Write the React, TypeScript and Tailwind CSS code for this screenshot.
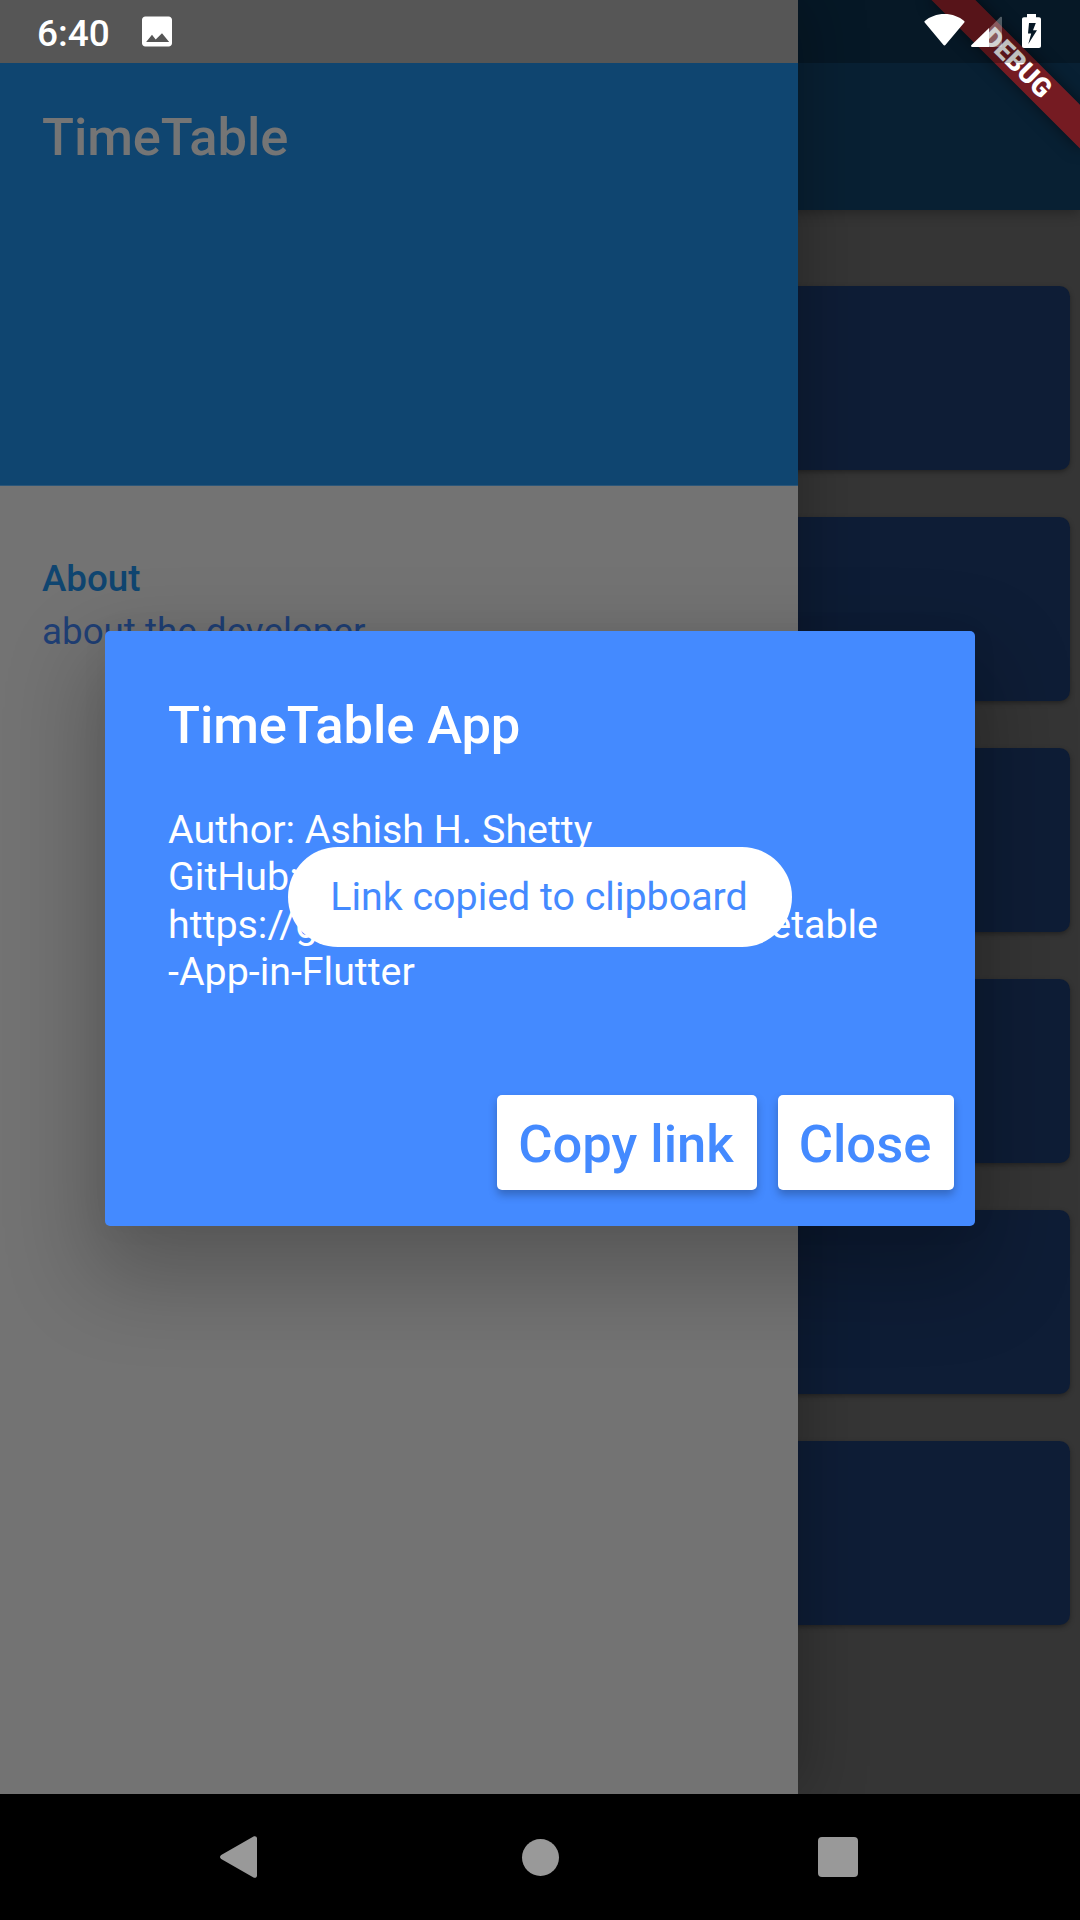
const cards = [0, 1, 2, 3, 4, 5];

function StatusBar() {
  return (
    <div className="absolute inset-x-0 top-0 flex h-[63px] items-start bg-black/25 text-white">
      <span className="ml-[37px] mt-[12px] text-[37px] leading-[44px] font-medium">6:40</span>
      <svg className="absolute left-[137px] top-[11px]" width="40" height="41" viewBox="0 0 24 24" fill="currentColor">
        <path d="M21 19V5c0-1.1-.9-2-2-2H5c-1.1 0-2 .9-2 2v14c0 1.1.9 2 2 2h14c1.1 0 2-.9 2-2zM9 14l2.200 2.800L15 13l4.300 5.300H5.500z" />
      </svg>
      <div className="absolute left-[924px] top-[14px] flex items-start">
        <svg width="41" height="32" viewBox="0 0 41 32" fill="currentColor">
          <path d="M20.500 0C12.800 0 5.800 2.700 .8 7c-.5.400-.5 1-.1 1.500l18.600 22.300c.6.800 1.700.800 2.300 0L40.300 8.500c.4-.500.3-1.100-.1-1.500C35.200 2.700 28.200 0 20.500 0z" />
        </svg>
        <svg className="ml-[6px] mt-[2px]" width="31" height="31" viewBox="0 0 31 31" fill="currentColor">
          <path opacity=".3" d="M18 12.500L29.300 1c.7-.7 1.700-.3 1.700.7V29.500c0 .900-.6 1.500-1.500 1.500H18z" />
          <path d="M18 12V31H1.300c-1.300 0-1.700-1-.8-1.900z" />
        </svg>
        <svg className="ml-[20px]" width="19" height="34" viewBox="0 0 19 34" fill="currentColor">
          <path fillRule="evenodd" d="M5 0h9v3.300h3c1.200 0 2 .800 2 2V32c0 1.200-.8 2-2 2H2c-1.200 0-2-.800-2-2V5.300c0-1.200.8-2 2-2h3zM7 9L6 19.500h3.200L6.300 30 15 16.300h-4L13.800 9z" />
        </svg>
      </div>
    </div>
  );
}

function DebugBanner() {
  return (
    <div className="absolute right-0 top-0 h-0 w-0 rotate-45">
      <div className="absolute left-[-105px] top-[73.5px] flex h-[31.5px] w-[210px] items-center justify-center bg-[#b61919]/63 text-[26.8px] leading-none font-black text-white shadow-[0_0_16px_rgba(0,0,0,0.5)]">
        DEBUG
      </div>
    </div>
  );
}

function Drawer() {
  return (
    <aside className="absolute left-0 top-0 h-[1794px] w-[798px] bg-[#737373] shadow-[7px_0_57px_rgba(0,0,0,0.25)]">
      <div className="h-[63px]" />
      <header className="h-[423px] border-b border-[#2b5679] bg-[#0f4570] px-[42px] pt-[43px]">
        <h1 className="text-[52.5px] leading-[62px] font-medium tracking-[-0.1px] text-[#757575]">TimeTable</h1>
      </header>
      <nav className="px-[42px] pt-[71px] text-[36.75px]">
        <p className="leading-[44px] font-medium text-[#0f4570]">About</p>
        <p className="mt-[9px] leading-[44px] text-[#1f3f75]">about the developer</p>
      </nav>
    </aside>
  );
}

function AboutDialog() {
  return (
    <section className="absolute left-[105px] top-[631px] flex h-[595px] w-[870px] flex-col rounded-[5px] bg-[#448aff] px-[63px] pt-[63px] text-white shadow-[0_39px_87px_15px_rgba(0,0,0,0.24),0_0_30px_rgba(0,0,0,0.04)]">
      <h2 className="text-[52.5px] leading-[62px] font-medium tracking-[-0.1px]">TimeTable App</h2>
      <div className="mt-[50px] text-[39.375px] leading-[47.25px]">
        <p>Author: Ashish H. Shetty</p>
        <p>GitHub:</p>
        <p className="flex w-[710px] justify-between">
          <span>https://github</span>
          <span>Timetable</span>
        </p>
        <p>-App-in-Flutter</p>
      </div>
      <div className="-mr-[42px] mt-auto mb-[36px] flex justify-end gap-[21px] text-[52.5px] leading-[62px] font-medium text-[#448aff]">
        <button className="h-[95px] w-[260px] rounded-[5px] bg-white pt-[3px] pr-[2px] shadow-[0_5px_8px_rgba(0,0,0,0.25)]">Copy link</button>
        <button className="h-[95px] w-[176px] rounded-[5px] bg-white pt-[3px] pr-[2px] shadow-[0_5px_8px_rgba(0,0,0,0.25)]">Close</button>
      </div>
    </section>
  );
}

export default function App() {
  return (
    <div className="relative flex h-[1920px] w-[1080px] flex-col overflow-hidden bg-[#353535] font-['Roboto',sans-serif]">
      <div className="z-0 h-[210px] shrink-0 bg-[#082033] shadow-[0_3px_12px_rgba(0,0,0,0.3)]" />
      <main className="flex flex-1 flex-col gap-[47px] px-[10.5px] pt-[76px]">
        {cards.map((card) => (
          <div key={card} className="h-[184px] rounded-[10.5px] bg-[#0e1d36] shadow-[0_2px_5px_rgba(0,0,0,0.35)]" />
        ))}
      </main>
      <Drawer />
      <AboutDialog />
      <div className="absolute left-[288px] top-[847px] flex h-[100px] w-[504px] items-center justify-center rounded-[50px] bg-white pr-[2px] text-[39.375px] text-[#448aff]">
        Link copied to clipboard
      </div>
      <DebugBanner />
      <StatusBar />
      <footer className="relative z-10 h-[126px] shrink-0 bg-black text-[#999]">
        <div className="flex h-full items-center justify-between pl-[220px] pr-[222px]">
          <svg width="37" height="42" viewBox="0 0 37 42" fill="currentColor">
            <path d="M33.500.6C35 -.4 37 .5 37 2.500v37c0 2-2 2.900-3.500 1.900L1.200 23c-1.600-1-1.600-3 0-4z" />
          </svg>
          <div className="ml-[6px] h-[37px] w-[37px] rounded-full bg-[#999]" />
          <div className="h-[40px] w-[40px] rounded-[4px] bg-[#999]" />
        </div>
      </footer>
    </div>
  );
}
